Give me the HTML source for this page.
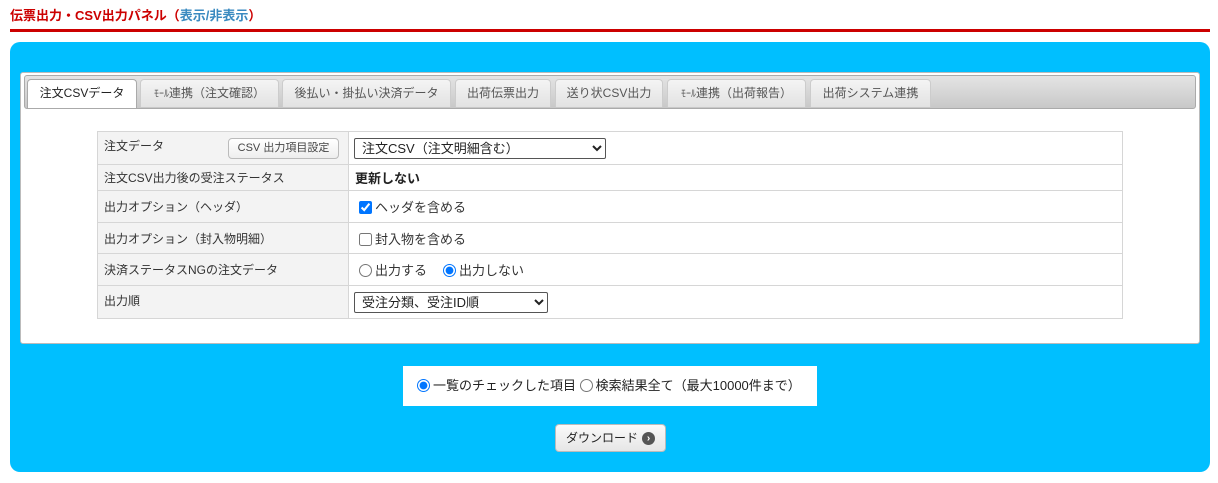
<!DOCTYPE html>
<html><head><meta charset="utf-8"><style>
*{box-sizing:border-box;margin:0;padding:0}
body{width:1218px;height:483px;background:#fff;font-family:"Liberation Sans","Noto Sans CJK JP",sans-serif;font-size:12px;color:#333;position:relative;overflow:hidden}
.title{position:absolute;left:10px;top:5px;font-weight:bold;color:#c00;font-size:13px}
.title span{color:#3a8ac0}
.line{position:absolute;left:10px;top:29px;width:1200px;height:3px;background:#c00}
.panel{position:absolute;left:10px;top:42px;width:1200px;height:430px;background:#00bfff;border-radius:10px}
.inner{position:absolute;left:20px;top:72px;width:1180px;height:272px;background:#fff;border:1px solid #bbb;border-radius:3px}
.tabbar{position:absolute;left:3px;top:2px;width:1172px;height:34px;background:linear-gradient(#e4e4e4,#c8c8c8);border:1px solid #aaa;border-radius:3px}
.tab{position:absolute;top:6px;height:28px;background:linear-gradient(#f4f4f4,#e2e2e2);border:1px solid #ccc;border-bottom:none;border-radius:4px 4px 0 0;text-align:center;line-height:26px;color:#555;font-size:12px}
.tab.a{background:#fff;color:#222;height:29px;border-color:#aaa}
table{position:absolute;left:97px;top:131px;width:1026px;border-collapse:collapse}
td{border:1px solid #d6d6d6;padding:0 6px;font-size:12px;vertical-align:middle}
td.v{font-size:13px;padding-left:7px}
td.l{width:251px;background:#f3f3f3;color:#333}
select{font-family:inherit;font-size:13px;height:21px;border:1px solid #555;border-radius:2px;background:#fff;color:#222;padding-left:3px}
.btn{position:absolute;left:130px;top:6px;width:111px;height:21px;border:1px solid #bbb;border-radius:4px;background:linear-gradient(#fff,#eee);font-size:11px;text-align:center;line-height:19px;color:#444}
input{vertical-align:-2px;margin-right:3px}
td.v input{margin-left:3px}
.bot{position:absolute;left:403px;top:366px;width:414px;height:40px;background:#fff;line-height:40px;padding-left:14px;font-size:13px;color:#222}
.dl{position:absolute;left:555px;top:424px;width:111px;height:28px;border:1px solid #bbb;border-radius:4px;background:linear-gradient(#fafafa,#e6e6e6);line-height:26px;padding-left:10px;font-size:12px;color:#222}
.dl i{position:absolute;left:86px;top:7px;width:13px;height:13px;border-radius:50%;background:#555;color:#fff;font-style:normal;font-size:10px;line-height:13px;text-align:center;font-weight:bold}
</style></head><body>
<div class="title">伝票出力・CSV出力パネル（<span>表示/非表示</span>）</div>
<div class="line"></div>
<div class="panel"></div>
<div class="inner">
 <div class="tabbar"></div>
 <div class="tab a" style="left:6px;width:110px">注文CSVデータ</div>
 <div class="tab" style="left:119px;width:139px"><span style="font-size:10px">ﾓｰﾙ</span>連携（注文確認）</div>
 <div class="tab" style="left:261px;width:169px">後払い・掛払い決済データ</div>
 <div class="tab" style="left:434px;width:96px">出荷伝票出力</div>
 <div class="tab" style="left:534px;width:108px">送り状CSV出力</div>
 <div class="tab" style="left:646px;width:139px"><span style="font-size:10px">ﾓｰﾙ</span>連携（出荷報告）</div>
 <div class="tab" style="left:789px;width:121px">出荷システム連携</div>
</div>
<table>
<tr style="height:33px"><td class="l" style="position:relative;vertical-align:top;padding-top:5px">注文データ<div class="btn">CSV 出力項目設定</div></td><td class="v" style="padding-left:5px"><select style="width:252px"><option>注文CSV（注文明細含む）</option></select></td></tr>
<tr style="height:26px"><td class="l">注文CSV出力後の受注ステータス</td><td class="v" style="font-weight:bold;color:#222;padding-left:6px">更新しない</td></tr>
<tr style="height:32px"><td class="l">出力オプション（ヘッダ）</td><td class="v"><input type="checkbox" checked>ヘッダを含める</td></tr>
<tr style="height:31px"><td class="l">出力オプション（封入物明細）</td><td class="v"><input type="checkbox">封入物を含める</td></tr>
<tr style="height:32px"><td class="l">決済ステータスNGの注文データ</td><td class="v"><input type="radio" name="a">出力する　<input type="radio" name="a" checked>出力しない</td></tr>
<tr style="height:33px"><td class="l" style="vertical-align:top;padding-top:6px">出力順</td><td class="v" style="padding-left:5px"><select style="width:194px"><option>受注分類、受注ID順</option></select></td></tr>
</table>
<div class="bot"><input type="radio" name="b" checked>一覧のチェックした項目 <input type="radio" name="b">検索結果全て（最大10000件まで）</div>
<div class="dl">ダウンロード<i>›</i></div>
</body></html>
